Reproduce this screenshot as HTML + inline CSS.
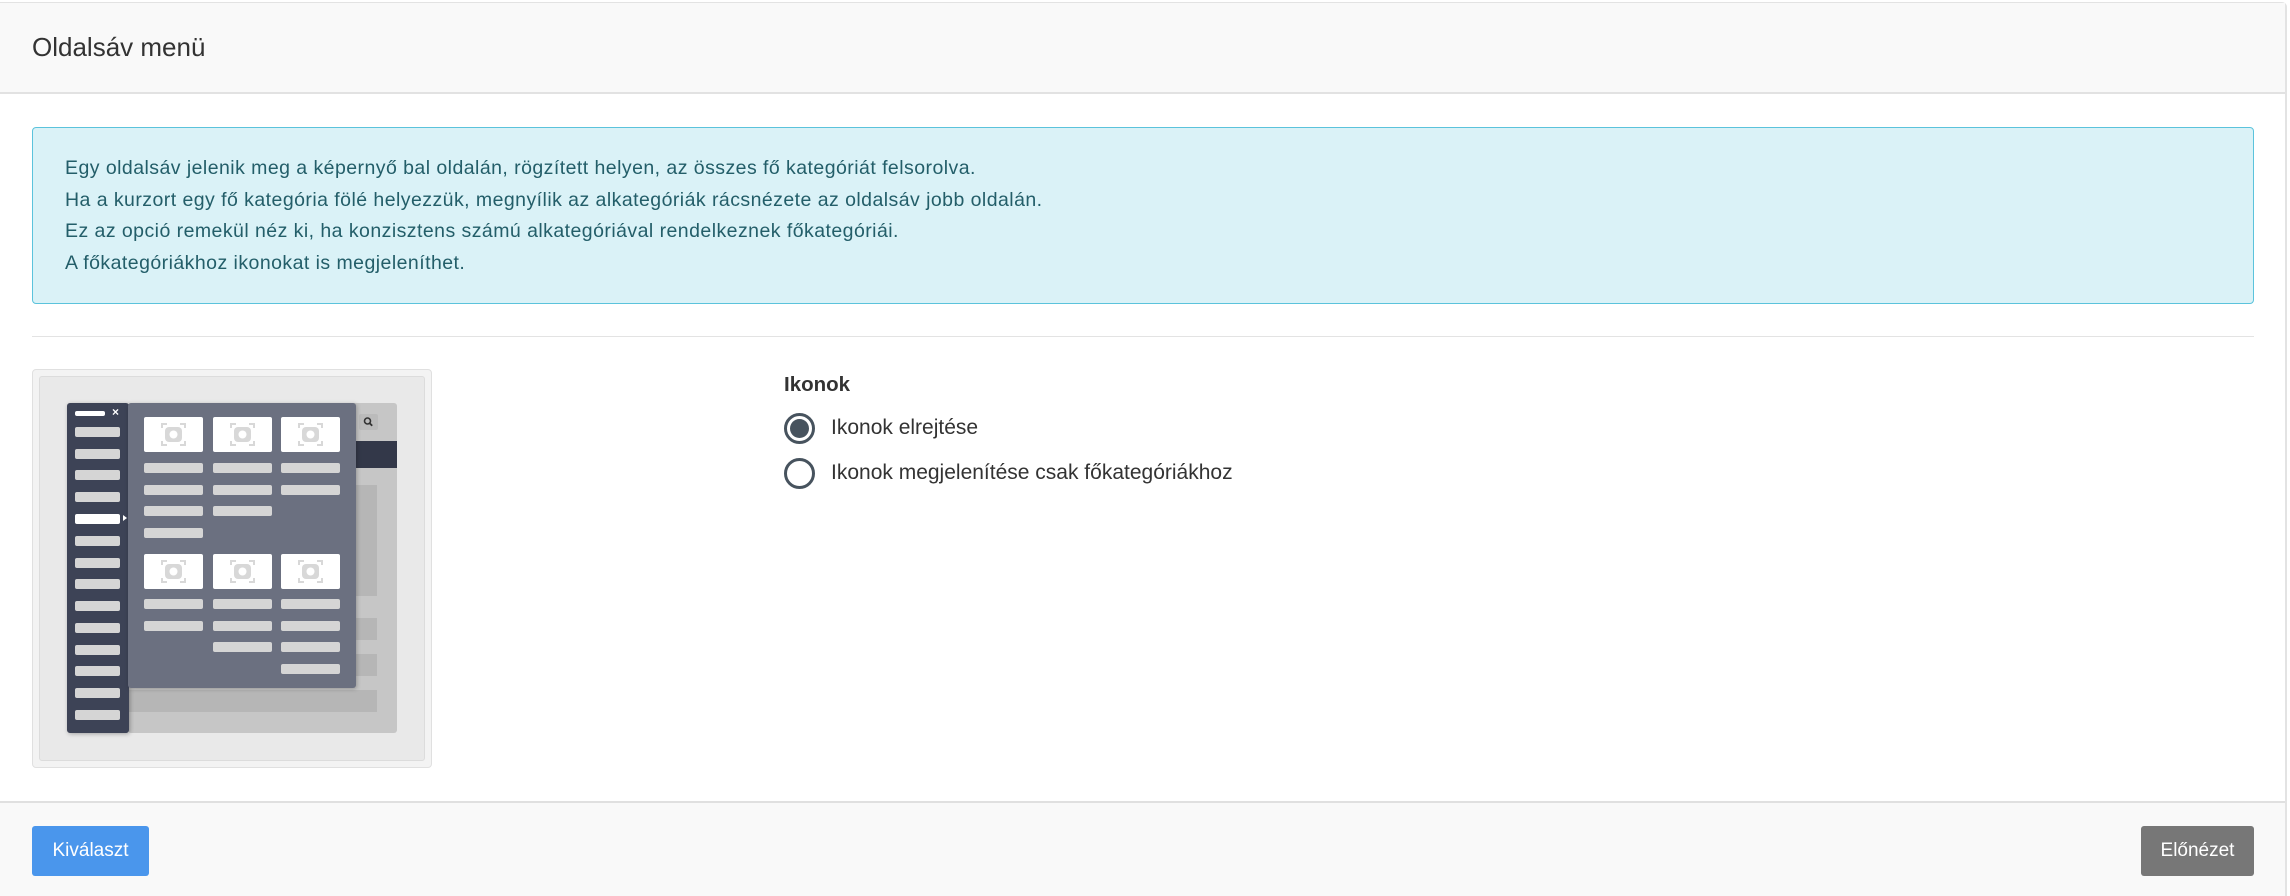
<!DOCTYPE html>
<html><head><meta charset="utf-8"><style>
*{box-sizing:border-box;margin:0;padding:0}
body{width:2290px;height:896px;background:#fff;font-family:"Liberation Sans",Roboto,sans-serif;position:relative;overflow:hidden;color:#333}
.a{position:absolute}
.frame{left:0;top:2px;width:2287px;height:894px;border-top:2px solid #e3e3e3;border-right:2px solid #e3e3e3;border-top-right-radius:5px}
.hdr{left:0;top:3px;width:2285px;height:91px;background:#f9f9f9;border-bottom:2px solid #e2e2e2}
.title{left:32px;top:32px;font-size:26px;color:#333}
.alert{left:32px;top:127px;width:2222px;height:177px;background:#daf2f7;border:1.5px solid #5bc3dc;border-radius:4px;padding:25px 0 0 32px;color:#235e69;font-size:19.5px;letter-spacing:0.45px;line-height:31.7px}
.hr{left:32px;top:336px;width:2222px;height:1px;background:#e3e3e3}
.ftr{left:0;top:801px;width:2285px;height:95px;background:#f9f9f9;border-top:2px solid #e0e0e0}
.btn{color:#fff;font-size:19px;text-align:center;line-height:50px;border-radius:3px;height:50px;top:826px}
.g{background:#d5d5d5;border-radius:2px;height:10px}
.w{background:#fff;border-radius:2px}
.radio{width:31px;height:31px;border:3px solid #47535e;border-radius:50%}
.lbl{font-size:21px;color:#333}
</style></head><body>
<div class="a frame"></div>
<div class="a hdr"></div>
<div class="a title">Oldalsáv menü</div>
<div class="a alert">Egy oldalsáv jelenik meg a képernyő bal oldalán, rögzített helyen, az összes fő kategóriát felsorolva.<br>Ha a kurzort egy fő kategória fölé helyezzük, megnyílik az alkategóriák rácsnézete az oldalsáv jobb oldalán.<br>Ez az opció remekül néz ki, ha konzisztens számú alkategóriával rendelkeznek főkategóriái.<br>A főkategóriákhoz ikonokat is megjeleníthet.</div>
<div class="a hr"></div>

<div class="a" style="left:32px;top:369px;width:400px;height:399px;border:1.5px solid #e0e0e0;border-radius:4px;background:#f3f3f3"></div>
<div class="a" style="left:39px;top:376px;width:386px;height:385px;border:1px solid #dcdcdc;border-radius:3px;background:#e9e9e9"></div>
<div class="a" style="left:128px;top:403px;width:269px;height:330px;background:#c6c6c6;border-radius:3px"></div>
<div class="a" style="left:359px;top:414px;width:19px;height:16px;background:#bbb;border-radius:2px"><svg width="19" height="16" viewBox="0 0 19 16"><circle cx="8.5" cy="7" r="3" fill="none" stroke="#333" stroke-width="1.6"/><path d="M10.7 9.2l2.5 2.5" stroke="#333" stroke-width="1.8"/></svg></div>
<div class="a" style="left:356px;top:441px;width:41px;height:27px;background:#333849"></div>
<div class="a" style="left:356px;top:485px;width:21px;height:111px;background:#b6b6b6"></div>
<div class="a" style="left:356px;top:618px;width:21px;height:22px;background:#b6b6b6"></div>
<div class="a" style="left:356px;top:654px;width:21px;height:22px;background:#b6b6b6"></div>
<div class="a" style="left:128px;top:690px;width:249px;height:22px;background:#b6b6b6"></div>
<div class="a" style="left:67px;top:403px;width:62px;height:330px;background:#3d4356;border-radius:3px;box-shadow:1px 1px 4px rgba(0,0,0,.3)"></div>
<div class="a" style="left:75px;top:411px;width:30px;height:5px;background:#fff;border-radius:2px"></div>
<div class="a" style="left:112px;top:405px;color:#fff;font-size:12px;font-weight:bold">×</div>
<div class="a" style="left:128px;top:403px;width:228px;height:285px;background:#6b7080;border-radius:3px;box-shadow:1px 1px 4px rgba(0,0,0,.25)"></div>
<div class="a" style="left:123px;top:515px;width:0;height:0;border-top:3px solid transparent;border-bottom:3px solid transparent;border-left:4px solid #fff"></div>
<div id="mk"></div>
<script>
var h='';
var ys=[427,449,470,492,514,536,558,579,601,623,645,666,688,710];
ys.forEach(function(y,i){h+='<div class="a g" style="left:75px;top:'+y+'px;width:45px;'+(i==4?'background:#fff':'')+'"></div>';});
var cx=[144,213,281];
var cam='<svg width="59" height="35" viewBox="0 0 59 35"><g fill="none" stroke="#d8d8d8" stroke-width="2"><path d="M18 11v-4h5M36 7h5v4M41 24v4h-5M23 28h-5v-4"/></g><rect x="21" y="10" width="17" height="15" rx="4" fill="#d8d8d8"/><circle cx="29.5" cy="17.5" r="4" fill="#fff"/></svg>';
function col(x,iy,n,by){h+='<div class="a w" style="left:'+x+'px;top:'+iy+'px;width:59px;height:35px">'+cam+'</div>';for(var i=0;i<n;i++)h+='<div class="a g" style="left:'+x+'px;top:'+(by+i*21.7)+'px;width:59px"></div>';}
col(cx[0],417,4,463);col(cx[1],417,3,463);col(cx[2],417,2,463);
col(cx[0],554,2,599);col(cx[1],554,3,599);col(cx[2],554,4,599);
document.getElementById('mk').innerHTML=h;
</script>

<div class="a" style="left:784px;top:373px;font-size:20.5px;font-weight:bold;color:#333">Ikonok</div>
<div class="a radio" style="left:784px;top:413px"></div>
<div class="a" style="left:790px;top:419px;width:19px;height:19px;border-radius:50%;background:#47535e"></div>
<div class="a lbl" style="left:831px;top:416px">Ikonok elrejtése</div>
<div class="a radio" style="left:784px;top:458px"></div>
<div class="a lbl" style="left:831px;top:461px">Ikonok megjelenítése csak főkategóriákhoz</div>

<div class="a ftr"></div>
<div class="a btn" style="left:32px;width:117px;background:#4a96ec">Kiválaszt</div>
<div class="a btn" style="left:2141px;width:113px;background:#777">Előnézet</div>
</body></html>
